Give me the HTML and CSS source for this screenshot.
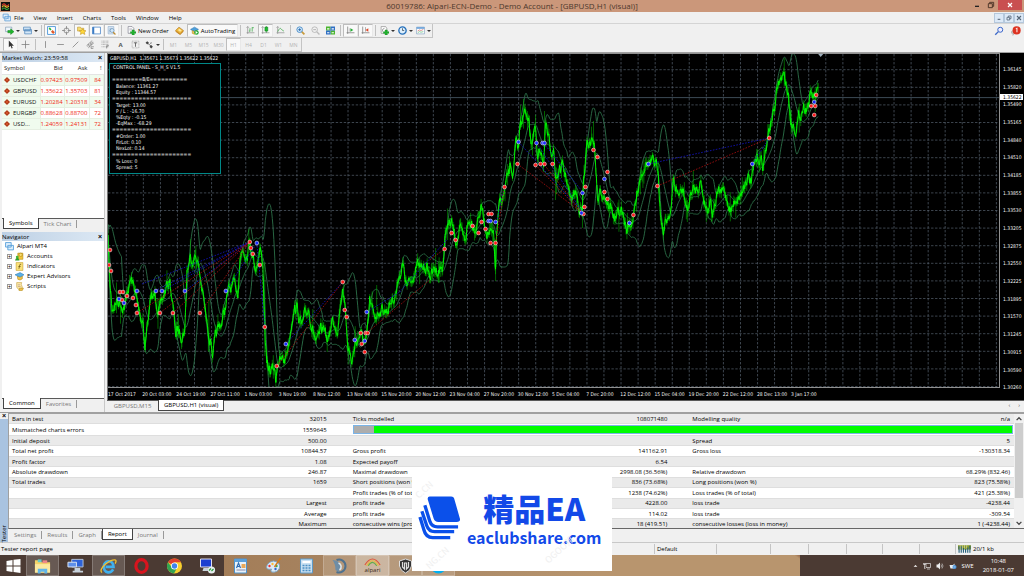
FILE: index.html
```html
<!DOCTYPE html>
<html lang="en">
<head>
<meta charset="utf-8">
<title>60019786: Alpari-ECN-Demo - Demo Account</title>
<link rel="stylesheet" href="styles.css">
</head>
<body>
<header class="titlebar">
  <svg class="logo" viewBox="0 0 16 16"><path fill="#111" d="M0 0h16v16H0z"/><path d="M2 6q3-5 6-1t6-1" stroke="#d8372a" stroke-width="2" fill="none"/><path d="M2 9q3-4 6-1t6-1" stroke="#e8c030" stroke-width="2" fill="none"/><path d="M2 13q3-4 6-1t6-1" stroke="#3ba33b" stroke-width="2" fill="none"/></svg>
  <h1 class="title">60019786: Alpari-ECN-Demo - Demo Account - [GBPUSD,H1 (visual)]</h1>
  <div class="winbtns">
    <button class="winbtn" aria-label="Minimize"><svg viewBox="0 0 12 12"><path d="M3 8h6" stroke="#222" stroke-width="2"/></svg></button>
    <button class="winbtn" aria-label="Restore"><svg viewBox="0 0 12 12"><path d="M2 4h6v6H2zM4 4V2h6v6H8" fill="none" stroke="#4a3326" stroke-width="1.4"/></svg></button>
    <button class="winbtn close" aria-label="Close"><svg viewBox="0 0 12 12"><path d="M3 3l6 6M9 3l-6 6" stroke="#fff" stroke-width="1.8"/></svg></button>
  </div>
</header>
<nav class="menubar">
  <svg class="menulogo" viewBox="0 0 16 16"><path d="M2 2h9v7H2zM5 6h10v8H5z" fill="#e8f3fc" stroke="#5b9bd5" stroke-width="1.4"/><path d="M7 12l2-3 2 2 2-3" fill="none" stroke="#5b9bd5"/></svg>
  <button>File</button><button>View</button><button>Insert</button><button>Charts</button><button>Tools</button><button>Window</button><button>Help</button>
  <div class="mdibtns">
    <button aria-label="Minimize chart"><svg viewBox="0 0 12 12"><path d="M4 8h4" stroke="#567" stroke-width="1.6"/></svg></button>
    <button aria-label="Restore chart"><svg viewBox="0 0 12 12"><path d="M3 5h4v4H3zM5 5V3h4v4H7" fill="none" stroke="#567" stroke-width="1.2"/></svg></button>
    <button aria-label="Close chart"><svg viewBox="0 0 12 12"><path d="M3 3l6 6M9 3l-6 6" stroke="#567" stroke-width="1.6"/></svg></button>
  </div>
</nav>
<div class="toolrow">
  <div class="tools">
    <button class="tool drop" aria-label="New chart"><svg viewBox="0 0 16 16"><path d="M1 2h11v8H1z" fill="#eef5fb" stroke="#6d8ba8"/><path d="M5 8h5V5l6 5-6 5v-3H5z" fill="#1db42a" stroke="#0d7a18" stroke-width=".8"/></svg></button>
    <button class="tool drop" aria-label="Profiles"><svg viewBox="0 0 16 16"><path d="M1 2h12v6H1zM3 6h12v8H3z" fill="#d6e8f8" stroke="#4f86bb" stroke-width="1.3"/><path d="M3 9h12" stroke="#4f86bb"/></svg></button>
    <i class="sep"></i>
    <button class="tool on" aria-label="Market Watch"><svg viewBox="0 0 16 16"><path d="M1 1h14v14H1z" fill="#fff" stroke="#4a94d8" stroke-width="1.6"/><path d="M3 5l2-3 3 4-2 2z" fill="#26b43a"/><path d="M7 10l3-3 4 4-3 3z" fill="#e05a2a"/></svg></button>
    <button class="tool" aria-label="Data Window"><svg viewBox="0 0 16 16"><circle cx="8" cy="8" r="4.5" fill="none" stroke="#777" stroke-width="1.3"/><path d="M8 0v6M8 10v6M0 8h6M10 8h6" stroke="#777" stroke-width="1.2"/></svg></button>
    <button class="tool on" aria-label="Navigator"><svg viewBox="0 0 16 16"><path d="M1 2h5l1 2h5v5H1z" fill="#f5dd72" stroke="#bd9120"/><path d="M10 5l2 3 4 .5-3 2.500 1 4-4-2-4 2 1-4-3-2.500 4-.5z" fill="#ffd83a" stroke="#bd8a10" stroke-width=".9"/></svg></button>
    <button class="tool on" aria-label="Terminal"><svg viewBox="0 0 16 16"><path d="M1 2h14v12H1z" fill="#fff" stroke="#3c7cc4" stroke-width="1.3"/><path d="M1 2h3v12H1z" fill="#3c7cc4"/></svg></button>
    <button class="tool on" aria-label="Strategy Tester"><svg viewBox="0 0 16 16"><path d="M2 1h10v13H2z" fill="#e6f0fa" stroke="#7da0c4"/><path d="M4 4h6M4 6v6M6 5v6" stroke="#7da0c4"/><circle cx="9" cy="8" r="3.500" fill="#d2e8fa" stroke="#5580a8"/><path d="M11 11l4 4" stroke="#c08c30" stroke-width="2.200"/></svg></button>
    <i class="sep"></i>
    <button class="tool wide"><svg viewBox="0 0 16 16"><path d="M2 1h7l3 3v9H2z" fill="#fff" stroke="#667"/><path d="M4 5h5M4 7h6" stroke="#99a"/><path d="M9 7h4v3h3v3h-3v3H9v-3H6v-3h3z" fill="#20b32d" stroke="#0d7a18" stroke-width=".6"/></svg>New Order</button>
    <button class="tool" aria-label="MetaEditor"><svg viewBox="0 0 16 16"><path d="M1 8l6-6 8 6-6 6z" fill="#f0b93a" stroke="#a56d12"/><path d="M1 8l8 6v2L1 10zM9 14l6-6v2l-6 6z" fill="#c98418"/><path d="M5 7l3-2 4 3-3 2z" fill="#fce9a5"/></svg></button>
    <button class="tool wide on"><svg viewBox="0 0 16 16"><path d="M1 6l7-4 7 4-7 4z" fill="#4ba0dd" stroke="#2b6fa8"/><path d="M4 8v5q4 3 7 0V8l-3 2z" fill="#f0c85a" stroke="#b88a20"/><circle cx="11.500" cy="11.500" r="4" fill="#22aa33"/><path d="M10 9l4 2.500-4 2.500z" fill="#fff"/></svg>AutoTrading</button>
    <i class="sep"></i>
    <button class="tool" aria-label="Bar chart"><svg viewBox="0 0 16 16"><path d="M3 1v13M1 12h14M1 3l2-2 2 2" fill="none" stroke="#888" stroke-width="1.200"/><path d="M7 4v6M5 9h2M11 2v8M11 3h3" stroke="#3aa846" stroke-width="1.300"/></svg></button>
    <button class="tool on" aria-label="Candlesticks"><svg viewBox="0 0 16 16"><path d="M3 1v13M1 12h14M1 3l2-2 2 2" fill="none" stroke="#888" stroke-width="1.200"/><path d="M9.500 0v12" stroke="#0c7a1b"/><path d="M7 2h5v7H7z" fill="#1fc02f" stroke="#0c7a1b"/></svg></button>
    <button class="tool" aria-label="Line chart"><svg viewBox="0 0 16 16"><path d="M3 1v13M1 12h14M1 3l2-2 2 2" fill="none" stroke="#888" stroke-width="1.200"/><path d="M3 10q4-8 6-5t5 4" fill="none" stroke="#3aa846" stroke-width="1.300"/></svg></button>
    <i class="sep"></i>
    <button class="tool" aria-label="Zoom in"><svg viewBox="0 0 16 16"><path d="M10 10l5 5" stroke="#c99a3a" stroke-width="3"/><circle cx="6.500" cy="6.500" r="5" fill="#d8ecfb" stroke="#3d84c4" stroke-width="1.500"/><path d="M4 6.500h5M6.500 4v5" stroke="#1f62a8" stroke-width="1.500"/></svg></button>
    <button class="tool" aria-label="Zoom out"><svg viewBox="0 0 16 16"><path d="M10 10l5 5" stroke="#bbb" stroke-width="2.500"/><circle cx="6.500" cy="6.500" r="5" fill="#f2f2f2" stroke="#aaa" stroke-width="1.300"/><path d="M4 6.500h5" stroke="#999" stroke-width="1.300"/></svg></button>
    <button class="tool" aria-label="Tile windows"><svg viewBox="0 0 16 16"><path d="M0 1h8v7H0zM8 8h8v7H8z" fill="#4bb52f"/><path d="M8 1h8v7H8zM0 8h8v7H0z" fill="#2f6fc4"/><path d="M2 4h4v2H2zM10 4h4v2h-4zM2 11h4v2H2zM10 11h4v2h-4z" fill="#fff"/></svg></button>
    <i class="sep"></i>
    <button class="tool on" aria-label="Auto scroll"><svg viewBox="0 0 16 16"><path d="M3 1v13M1 12h14" stroke="#777" stroke-width="1.300"/><path d="M7 4v6" stroke="#777"/><path d="M8 4l5 3-5 3z" fill="#1fae2f"/></svg></button>
    <button class="tool on" aria-label="Chart shift"><svg viewBox="0 0 16 16"><path d="M3 1v13M1 12h14" stroke="#777" stroke-width="1.300"/><path d="M8 2v8" stroke="#777"/><path d="M13 4L8 7l5 3z" fill="#e0482a"/></svg></button>
    <i class="sep"></i>
    <button class="tool drop" aria-label="Indicators"><svg viewBox="0 0 16 16"><path d="M2 1h8l2 3v9H2z" fill="#fff" stroke="#777"/><path d="M4 10q0-6 4-6" fill="none" stroke="#555"/><path d="M9 7h4v3h3v3h-3v3H9v-3H6v-3h3z" fill="#20b32d" stroke="#0d7a18" stroke-width=".6"/></svg></button>
    <button class="tool drop" aria-label="Periods"><svg viewBox="0 0 16 16"><circle cx="8" cy="8" r="6.500" fill="#dceefb" stroke="#2570ba" stroke-width="2.400"/><path d="M8 4v4h3" fill="none" stroke="#234" stroke-width="1.200"/></svg></button>
    <button class="tool drop" aria-label="Templates"><svg viewBox="0 0 16 16"><path d="M1 2h14v12H1z" fill="#fff" stroke="#6f93b8"/><path d="M1 2h14v3H1z" fill="#6ba3da"/><path d="M3 9l3-2 3 1 4-2" stroke="#c44" fill="none"/><path d="M3 12l3-2 3 1 4-1" stroke="#3a5" fill="none"/></svg></button>
  </div>
  <div class="toolside">
    <button class="tool" aria-label="Search"><svg viewBox="0 0 16 16"><path d="M7 9l-5 5" stroke="#3a67c8" stroke-width="2.200"/><circle cx="10" cy="6" r="4" fill="#eef" stroke="#3a67c8" stroke-width="1.600"/></svg></button>
    <button class="tool" aria-label="Notifications"><svg viewBox="0 0 16 16"><path d="M0 11q0-4 5-4h4v5H5l-2 3v-3z" fill="#ccc" stroke="#999" stroke-width=".7"/><circle cx="9" cy="7" r="6.500" fill="#dd3322"/><path d="M8 4.500L9.500 3v7" fill="none" stroke="#fff" stroke-width="1.600"/></svg></button>
  </div>
</div>
<div class="toolrow second">
  <div class="tools">
    <button class="tool on" aria-label="Cursor"><svg viewBox="0 0 16 16"><path d="M5 1v12l3-3 2 5 2-1-2-4h4z" fill="#333"/></svg></button>
    <button class="tool" aria-label="Crosshair"><svg viewBox="0 0 16 16"><path d="M8 1v14M1 8h14" stroke="#777" stroke-width="1.300"/></svg></button>
    <i class="sep"></i>
    <button class="tool" aria-label="Vertical line"><svg viewBox="0 0 16 16"><path d="M8 2v12" stroke="#777" stroke-width="1.300"/></svg></button>
    <button class="tool" aria-label="Horizontal line"><svg viewBox="0 0 16 16"><path d="M2 8h12" stroke="#777" stroke-width="1.300"/></svg></button>
    <button class="tool" aria-label="Trendline"><svg viewBox="0 0 16 16"><path d="M3 13L13 3" stroke="#777" stroke-width="1.300"/></svg></button>
    <button class="tool" aria-label="Channel"><svg viewBox="0 0 16 16"><path d="M1 10L11 1M4 14l10-9M3 12l2-5M6 12l3-8M9 9l3-6M9 12h5M9 15h4M9 12v3" stroke="#666" fill="none"/></svg></button>
    <button class="tool" aria-label="Fibonacci"><svg viewBox="0 0 16 16"><path d="M1 2h13M1 5h13M1 8h13M1 12h8" stroke="#777" stroke-dasharray="1.500 1"/><path d="M10 15v-5h4M10 12h3" fill="none" stroke="#555"/></svg></button>
    <button class="tool glyph">A</button>
    <button class="tool" aria-label="Text label"><svg viewBox="0 0 16 16"><path d="M2 2h12v12H2z" fill="none" stroke="#888" stroke-dasharray="1.500 1"/><path d="M5 5h6M8 5v7" stroke="#555" stroke-width="1.500"/></svg></button>
    <button class="tool drop" aria-label="Arrows"><svg viewBox="0 0 16 16"><path d="M1 5l3-3 3 3-3 3zM8 12l3-3 3 3-3 3z" fill="#444"/><path d="M5 6l6 5M9 6l3-1" stroke="#444" stroke-width="1.300"/></svg></button>
    <i class="sep"></i>
    <button class="tool tf">M1</button><button class="tool tf">M5</button><button class="tool tf">M15</button><button class="tool tf">M30</button><button class="tool tf on">H1</button><button class="tool tf">H4</button><button class="tool tf">D1</button><button class="tool tf">W1</button><button class="tool tf">MN</button>
  </div>
</div>
<main class="work">
  <aside class="side">
    <section class="panel watch">
      <div class="panelhead"><h2>Market Watch: 23:59:58</h2><button aria-label="Close Market Watch">×</button></div>
      <table class="quotes">
        <thead><tr><th>Symbol</th><th>Bid</th><th>Ask</th><th>!</th></tr></thead>
        <tbody>
          <tr><td><i class="diamond"></i>USDCHF</td><td>0.97425</td><td>0.97509</td><td>84</td></tr>
          <tr><td><i class="diamond"></i>GBPUSD</td><td>1.35622</td><td>1.35703</td><td>81</td></tr>
          <tr><td><i class="diamond"></i>EURUSD</td><td>1.20284</td><td>1.20318</td><td>34</td></tr>
          <tr><td><i class="diamond"></i>EURGBP</td><td>0.88628</td><td>0.88700</td><td>72</td></tr>
          <tr><td><i class="diamond"></i>USD...</td><td>1.24059</td><td>1.24131</td><td>72</td></tr>
        </tbody>
      </table>
      <div class="tabs"><button class="tab active">Symbols</button><button class="tab">Tick Chart</button></div>
    </section>
    <section class="panel nav">
      <div class="panelhead"><h2>Navigator</h2><button aria-label="Close Navigator">×</button></div>
      <ul class="tree">
        <li><svg viewBox="0 0 16 16"><path d="M1 1h10v8H1zM5 6h10v8H5z" fill="#dff0fc" stroke="#4f9ad8" stroke-width="1.500"/></svg>Alpari MT4
          <ul>
            <li><i class="plus">+</i><svg viewBox="0 0 16 16"><path d="M5 2h9v11H5z" fill="#f3c63a" stroke="#b18712"/><circle cx="10" cy="5" r="3" fill="#f7dc70" stroke="#a87e10"/><circle cx="4" cy="9" r="2.500" fill="#46b535"/><path d="M0 15q1-5 4-5t4 5z" fill="#2f9e2c"/></svg>Accounts</li>
            <li><i class="plus">+</i><svg viewBox="0 0 16 16"><path d="M2 1h12v14H2z" fill="#fae27a" stroke="#c29a22"/><path d="M11 4q-3-1-3 3l-1 5M6 8h4" fill="none" stroke="#6a5210" stroke-width="1.300"/></svg>Indicators</li>
            <li><i class="plus">+</i><svg viewBox="0 0 16 16"><path d="M4 7h9v5q-4 4-8 1z" fill="#f3c24a" stroke="#b18712"/><path d="M0 5l9-4 7 4-7 4z" fill="#5bb1e6" stroke="#2f7db8"/></svg>Expert Advisors</li>
            <li><i class="plus">+</i><svg viewBox="0 0 16 16"><path d="M3 1h9l-1 3 2 5-1 4H6L3 9z" fill="#fae9a5" stroke="#c29a3a"/><path d="M5 5h4M5 8h5" stroke="#a88"/><path d="M8 11h7l-2 4H7z" fill="#f3c24a" stroke="#b18712"/></svg>Scripts</li>
          </ul>
        </li>
      </ul>
      <div class="tabs"><button class="tab active">Common</button><button class="tab">Favorites</button></div>
    </section>
  </aside>
  <section class="charts">
    <div class="chart">
      <div class="plot">
        <svg id="plot" viewBox="108 54 892 333" preserveAspectRatio="none" role="img" aria-label="GBPUSD H1 price chart"></svg>
        <div class="symbol">GBPUSD,H1&nbsp; 1.35671 1.35673 1.35622 1.35622</div>
        <div class="control">
          <p class="heading">CONTROL PANEL - S_H_S V1.5</p>
          <p class="rule first">========B/E==========</p>
          <p>Balance: 11361.27</p><p>Equity : 11344.57</p>
          <p class="rule">=====================</p>
          <p>Target: 13.00</p><p>P / L : -16.70</p><p>%Eqty : -0.15</p><p>-EqMax : -68.29</p>
          <p class="rule">=====================</p>
          <p>#Order: 1.00</p><p>FirLot: 0.10</p><p>NexLot: 0.14</p>
          <p class="rule">=====================</p>
          <p>% Loss: 0</p><p>Spread: 5</p>
        </div>
      </div>
      <div class="prices">
        <span>1.36145</span><span>1.35820</span><span>1.35490</span><span>1.35165</span><span>1.34840</span><span>1.34510</span><span>1.34185</span><span>1.33855</span><span>1.33530</span><span>1.33205</span><span>1.32875</span><span>1.32550</span><span>1.32225</span><span>1.31895</span><span>1.31570</span><span>1.31245</span><span>1.30915</span><span>1.30590</span><span>1.30260</span>
        <b class="current">1.35622</b>
      </div>
      <div class="times">
        <span>17 Oct 2017</span><span>20 Oct 03:00</span><span>24 Oct 19:00</span><span>27 Oct 11:00</span><span>1 Nov 03:00</span><span>3 Nov 19:00</span><span>8 Nov 12:00</span><span>13 Nov 04:00</span><span>15 Nov 20:00</span><span>20 Nov 12:00</span><span>23 Nov 04:00</span><span>27 Nov 20:00</span><span>30 Nov 12:00</span><span>5 Dec 04:00</span><span>7 Dec 20:00</span><span>12 Dec 12:00</span><span>15 Dec 04:00</span><span>19 Dec 20:00</span><span>22 Dec 12:00</span><span>28 Dec 13:00</span><span>3 Jan 17:00</span>
      </div>
    </div>
    <div class="tabs charttabs"><button class="tab">GBPUSD,M15</button><button class="tab active">GBPUSD,H1 (visual)</button><span class="pager">‹&nbsp;&nbsp;&nbsp;&nbsp;&nbsp;›</span></div>
  </section>
</main>
<section class="tester">
  <div class="testerside"><button aria-label="Close Tester">×</button><h2>Tester</h2></div>
  <div class="testermain">
    <div class="reportwrap">
      <div class="reportclip">
      <table class="report">
        <tbody>
          <tr><td>Bars in test</td><td>32015</td><td>Ticks modelled</td><td>108071480</td><td>Modelling quality</td><td>n/a</td></tr>
          <tr><td>Mismatched charts errors</td><td>1559645</td><td colspan="4" class="barcell"><div class="bar"><i></i></div></td></tr>
          <tr><td>Initial deposit</td><td>500.00</td><td></td><td></td><td>Spread</td><td>5</td></tr>
          <tr><td>Total net profit</td><td>10844.57</td><td>Gross profit</td><td>141162.91</td><td>Gross loss</td><td>-130318.34</td></tr>
          <tr><td>Profit factor</td><td>1.08</td><td>Expected payoff</td><td>6.54</td><td></td><td></td></tr>
          <tr><td>Absolute drawdown</td><td>246.87</td><td>Maximal drawdown</td><td>2998.08 (36.56%)</td><td>Relative drawdown</td><td>68.29% (832.46)</td></tr>
          <tr><td>Total trades</td><td>1659</td><td>Short positions (won %)</td><td>836 (73.68%)</td><td>Long positions (won %)</td><td>823 (75.58%)</td></tr>
          <tr><td></td><td></td><td>Profit trades (% of total)</td><td>1238 (74.62%)</td><td>Loss trades (% of total)</td><td>421 (25.38%)</td></tr>
          <tr><td></td><td>Largest</td><td>profit trade</td><td>4228.00</td><td>loss trade</td><td>-4238.44</td></tr>
          <tr><td></td><td>Average</td><td>profit trade</td><td>114.02</td><td>loss trade</td><td>-309.54</td></tr>
          <tr><td></td><td>Maximum</td><td>consecutive wins (profit in money)</td><td>18 (419.51)</td><td>consecutive losses (loss in money)</td><td>1 (-4238.44)</td></tr>
        </tbody>
      </table>
      </div>
      <div class="scroll"><svg viewBox="0 0 10 10"><path d="M2 7l3-3 3 3" fill="none" stroke="#444" stroke-width="1.600"/></svg><i></i><svg viewBox="0 0 10 10"><path d="M2 3l3 3 3-3" fill="none" stroke="#444" stroke-width="1.600"/></svg></div>
    </div>
    <div class="tabs testertabs"><button class="tab">Settings</button><button class="tab">Results</button><button class="tab">Graph</button><button class="tab active">Report</button><button class="tab">Journal</button></div>
  </div>
</section>
<footer class="status">
  <span class="msg">Tester report page</span>
  <div class="cells"><span>Default</span><span></span><span></span><span></span><span></span><span></span><span></span><span class="net"><svg viewBox="0 0 24 14"><path d="M0 0h24v8H0z" fill="#8a9a2a"/><path d="M2 2v12M6 2v12M10 5v9M14 7v7M18 4v10M22 1v13" stroke="#1f5d7a" stroke-width="2"/><path d="M4 0v8M8 0v8M12 0v6M16 0v6" stroke="#eef0d0"/></svg>20/1 kb</span></div>
</footer>
<footer class="taskbar">
  <div class="apps">
    <button aria-label="Start"><svg viewBox="0 0 16 16"><path d="M1 3l6-1v5.500H1zM8 1.800L15 1v6.500H8zM1 8.500h6V14l-6-1zM8 8.500h7V15l-7-1z" fill="#fff"/></svg></button>
    <button class="open" aria-label="File Explorer"><svg viewBox="0 0 18 16"><path d="M1 2h6l1 2h9v11H1z" fill="#f4d468"/><path d="M4 1h4v3H4z" fill="#6cc"/><path d="M9 2h5v3H9z" fill="#e88"/><path d="M1 6h16v9H1z" fill="#fbe9a0"/><path d="M4 16v-5h10v5h-3v-2H7v2z" fill="#62b5e8"/></svg></button>
    <button aria-label="Remote Desktop"><svg viewBox="0 0 18 16"><path d="M5 1h12v8H5z" fill="#2e62d8" stroke="#b8c6d8"/><path d="M1 4h9v5H1z" fill="#5e8fe8" stroke="#dde6f2"/><path d="M8 10h6v3H8zM6 13h11v2H6z" fill="#c8d2dc"/></svg></button>
    <button class="open" aria-label="Internet Explorer"><svg viewBox="0 0 18 16"><path d="M14 11.500q-2 3.500-5.500 3.200Q4 14 4 8.500 4.500 3.500 9 3q5 0 5.300 6H6" fill="none" stroke="#3fb0ee" stroke-width="2.800"/><path d="M2 15Q-1 12 6 6q6-5 10-4.500 2 .5 0 4" fill="none" stroke="#f2c02c" stroke-width="1.400"/></svg></button>
    <button aria-label="Opera"><svg viewBox="0 0 16 16"><ellipse cx="8" cy="8" rx="5.600" ry="6.400" fill="none" stroke="#d8141e" stroke-width="3.200"/></svg></button>
    <button aria-label="Chrome"><svg viewBox="0 0 16 16"><circle cx="8" cy="8" r="7.500" fill="#f7cf2e"/><path d="M8 8L1.500 4.200A7.500 7.500 0 0 1 14.500 4.200H8z" fill="#e0412f"/><path d="M1.500 4.200A7.500 7.500 0 0 0 7.500 15.500L10.500 10 8 8 5 9z" fill="#33a352"/><circle cx="8" cy="8" r="3.500" fill="#fff"/><circle cx="8" cy="8" r="2.700" fill="#3f83ee"/></svg></button>
    <button aria-label="Terminal server"><svg viewBox="0 0 16 16"><path d="M1 1h11v8H1z" fill="#1d3fd0" stroke="#dde"/><path d="M4 10h6v3H3z" fill="#ccd4dc"/><circle cx="12" cy="12" r="3.600" fill="#e8eef0"/><path d="M9.500 12.500l2-2M12 13l2-2" stroke="#2a9a3a" stroke-width="1.200"/></svg></button>
    <button aria-label="WordPad"><svg viewBox="0 0 16 16"><path d="M2 1h12v14H2z" fill="#e9f3fb" stroke="#4f93cc"/><path d="M2 1h12v3H2z" fill="#5aa0dc"/><path d="M4 10l2-5 2 5M5 8.500h2" fill="none" stroke="#2d6cb4" stroke-width="1.200"/><path d="M9 6h4v4H9z" fill="#e9a95a"/><path d="M4 12h9" stroke="#88a"/></svg></button>
    <button aria-label="Paint"><svg viewBox="0 0 16 16"><path d="M8 3q7 1 6 7-2 5-8 4-1-1 0-3-5 1-5-2 1-5 7-6z" fill="#dcebf6" stroke="#7fa6c4"/><circle cx="4" cy="8" r="1.200" fill="#e33"/><circle cx="7" cy="6" r="1.200" fill="#fb3"/><circle cx="11" cy="8" r="1.200" fill="#3a5"/><circle cx="10" cy="11" r="1.200" fill="#36c"/><path d="M15 0L9 9" stroke="#d07a20" stroke-width="1.500"/></svg></button>
    <button aria-label="Calculator"><svg viewBox="0 0 16 16"><path d="M2 1h12v14H2z" fill="#c9e0f2" stroke="#5f9bc8"/><path d="M4 3h8v2H4z" fill="#fff"/><path d="M4 7.500h8M4 10h8M4 12.500h8" stroke="#4c8fc4" stroke-width="1.600" stroke-dasharray="2 1"/></svg></button>
    <button class="open" aria-label="TeamSpeak"><svg viewBox="0 0 16 16"><path d="M5 2a6.500 6.500 0 1 1 0 12" fill="none" stroke="#4f718e" stroke-width="2"/><path d="M1 2q7 0 9 7l-3 5-3-2q0-6-3-10z" fill="#6d8da6"/><path d="M7 5a4 4 0 0 1 1 7" fill="none" stroke="#dfe8ee" stroke-width="1.600"/></svg></button>
    <button class="open lit"><svg class="rainbow" viewBox="0 0 20 9"><path d="M1 8Q10-6 19 8" fill="none" stroke="#e0563a" stroke-width="1.300"/><path d="M3 9Q10-3 17 9" fill="none" stroke="#efb63c" stroke-width="1.300"/><path d="M5 9q5-8 10 0" fill="none" stroke="#64ac4a" stroke-width="1.300"/></svg>alpari</button>
    <button class="open" aria-label="World of Tanks"><svg viewBox="0 0 16 16"><path d="M8 1l6 2v5q-1 5-6 7-5-2-6-7V3z" fill="#333" stroke="#ddd"/><path d="M5 4v5l2 2V5h2v6l2-2V4" fill="none" stroke="#ddd" stroke-width="1.200"/></svg></button>
    <button class="open" aria-label="Skype"><svg viewBox="0 0 16 16"><circle cx="8" cy="8" r="7.500" fill="#00aff0"/></svg></button>
  </div>
  <div class="tray">
    <svg class="up" viewBox="0 0 8 8"><path d="M1 6l3-3 3 3z" fill="#fff"/></svg>
    <svg viewBox="0 0 16 16"><path d="M6 3h9v8H6zM8 14h6M3 2v5M1 2v3h4V2M3 7v6h2" fill="none" stroke="#eee" stroke-width="1.300"/></svg>
    <svg viewBox="0 0 16 16"><path d="M1 5h3l4-4v14l-4-4H1z" fill="#eee"/><path d="M10 5q2 3 0 6M12 3q4 5 0 10" fill="none" stroke="#ddd" stroke-width="1.200"/></svg>
    <svg viewBox="0 0 16 16"><path d="M1 6h7l3-3v10H3z" fill="#e8eef2"/><circle cx="11" cy="10" r="4" fill="#4b94dc"/><path d="M9 10h4" stroke="#fff"/></svg>
    <span>SWE</span>
    <time>10:48<br>2018-01-07</time>
  </div>
</footer>
<div class="stamp">
  <svg viewBox="0 0 44 44"><path fill="#0b50ea" d="M12 0h22q2.500 0 3 2l6 21q.5 3-3.500 3H21q-4 0-5-3.500L10 3q-.5-3 2-3z"/><path d="M7 9l5 16q2 6 8 6h21M4 15l5 15q2 6 8 6h20M2 21l4 13q2 8 9 8h18" fill="none" stroke="#0b50ea" stroke-width="3.400"/></svg>
  <div class="stamptext"><strong>精品EA</strong><span>eaclubshare.com</span></div>
  <i class="faint a">C.CN</i><i class="faint b">NG.CN</i><i class="faint c">OGOO邦</i>
</div>
<script src="chart.js"></script>
</body>
</html>
```
FILE: styles.css
```css
* { box-sizing: border-box; }
body { margin: 0; height: 100vh; display: flex; flex-direction: column; overflow: hidden; background: #f0f0f0; color: #000; font: 6px/8px "Open Sans", "Noto Sans", sans-serif; }
button { font: inherit; color: inherit; background: none; border: 0; padding: 0; margin: 0; white-space: nowrap; }
h1, h2, p { margin: 0; font: inherit; }
svg { display: block; flex: none; }
ul { list-style: none; margin: 0; padding: 0; }

.titlebar { flex: none; height: 12px; display: flex; align-items: center; background: #cb977a; }
.logo { width: 9px; height: 9px; margin-left: 1px; }
.title { flex: 1; text-align: center; font-size: 8px; line-height: 12px; color: #4b382d; padding-left: 44px; }
.winbtns { display: flex; align-self: stretch; margin-right: 2px; }
.winbtn { width: 14px; height: 10px; display: flex; align-items: center; justify-content: center; }
.winbtn svg { width: 8px; height: 8px; }
.close { width: 24px; background: #c94f50; }

.menubar { flex: none; height: 12px; display: flex; align-items: center; gap: 10px; border-bottom: 1px solid #d4d4d4; padding-left: 2px; }
.menulogo { width: 9px; height: 9px; margin-right: -7px; }
.mdibtns { margin-left: auto; display: flex; }
.mdibtns button { width: 10px; height: 10px; display: flex; align-items: center; justify-content: center; background: #dce9f7; border: 1px solid #b5c8dc; }
.mdibtns svg { width: 8px; height: 8px; }

.toolrow { flex: none; height: 14px; display: flex; justify-content: space-between; }
.tools { display: flex; align-items: center; padding-left: 3px; border: solid #c4c4c4; border-width: 0 1px 1px 0; }
.tool { width: 15px; height: 13px; display: flex; align-items: center; justify-content: center; gap: 2px; border: 1px solid transparent; }
.tool svg { width: 9px; height: 9px; }
.tool.on { background: #f9f9f9; border-color: #bdbdbd #e8e8e8 #e8e8e8 #bdbdbd; }
.tool.wide { width: auto; padding: 0 2px; }
.tool.drop { width: 18px; }
.tool.drop::after { content: ""; border: 2px solid transparent; border-top-color: #333; border-bottom-width: 0; }
.sep { width: 1px; height: 11px; margin: 0 2px; background: #c0c0c0; }
.toolside { display: flex; gap: 2px; padding-right: 1px; align-items: center; }
.toolside .tool svg { width: 10px; height: 10px; }
.glyph { font-weight: bold; color: #555; }
.tf { color: #b4b4b4; font-size: 5px; }

.work { flex: 1; min-height: 0; display: flex; gap: 2px; border-top: 1px solid #a0a0a0; }
.side { flex: none; width: 105px; display: flex; flex-direction: column; gap: 2px; padding: 0 0 2px 2px; border-right: 1px solid #c8c8c8; }
.panel { display: flex; flex-direction: column; background: #fff; min-height: 0; }
.watch { flex: 176 0 0; }
.nav { flex: 177 0 0; }
.panelhead { flex: none; height: 9px; display: flex; justify-content: space-between; align-items: center; background: linear-gradient(90deg, #bdd0e4, #dce8f4); padding-right: 2px; }
.panelhead button { font: bold 7px/8px "Liberation Sans", sans-serif; }
.quotes { border-collapse: collapse; width: 100%; table-layout: fixed; }
.quotes th { height: 12px; font-weight: normal; text-align: right; padding: 0 2px; border-bottom: 1px solid #e4e4e4; color: #222; }
.quotes th:first-child, .quotes td:first-child { text-align: left; width: 38px; padding-left: 2px; }
.quotes th:last-child, .quotes td:last-child { width: 14px; }
.quotes td { height: 11px; padding: 0 2px 0 0; text-align: right; color: #f01f14; background: #fff; border: 1px solid #e6efe2; border-width: 0 1px 1px 0; white-space: nowrap; }
.quotes td:first-child { color: #111; background: #effaec; }
.quotes tr:nth-child(odd) td { background: #f0fbee; }
.diamond { display: inline-block; width: 4px; height: 4px; margin: 0 4px 0 1px; background: #d8542a; border: 1px solid #a8381a; transform: rotate(45deg); vertical-align: middle; }
.tabs { flex: none; display: flex; height: 12px; background: #f0f0f0; border-top: 1px solid #5a5a5a; padding-left: 1px; align-items: flex-start; }
.side .tabs { margin-top: auto; }
.tab { height: 8px; padding: 0 5px; border-right: 1px solid #999; color: #777; margin-top: 1px; line-height: 8px; }
.tab.active { height: 11px; margin-top: -1px; background: #fff; border: solid #444; border-width: 0 1px 1px; color: #000; line-height: 10px; }
.tree { padding: 0 3px; }
.tree li { line-height: 10px; }
.tree svg { display: inline-block; width: 9px; height: 9px; margin-right: 3px; vertical-align: middle; }
.tree ul { padding-left: 2px; }
.plus { display: inline-block; width: 5px; height: 5px; margin-right: 3px; border: 1px solid #999; font: 5px/3px "Liberation Sans", sans-serif; text-align: center; vertical-align: middle; }

.charts { flex: 1; min-width: 0; display: flex; flex-direction: column; }
.chart { flex: 1; min-height: 0; display: grid; grid-template-columns: 1fr 24px; grid-template-rows: 1fr 12px; background: #000; color: #f4f4f4; border-left: 1px solid #777; font: 5px/6px "DejaVu Sans Condensed", "DejaVu Sans", sans-serif; }
.plot { position: relative; min-height: 0; min-width: 0; border: solid #909090; border-width: 1px 1px 1px 0; }
.plot > svg { position: absolute; inset: 0; width: 100%; height: 100%; }
.symbol { position: absolute; left: 2px; top: 1px; }
.control { position: absolute; left: 1px; top: 9px; width: 112px; padding-bottom: 3px; background: #000; border: 1px solid #008888; }
.control p { padding-left: 6px; line-height: 6px; }
.control .heading { padding-left: 3px; }
.control .rule { padding-left: 2px; line-height: 7px; }
.control .first { margin-top: 6px; }
.prices { position: relative; display: flex; flex-direction: column; margin: 7px 0 -8px; padding-left: 3px; }
.prices span { flex: 1; display: flex; align-items: center; }
.current { position: absolute; left: 0; right: 1px; top: 34px; padding-left: 3px; background: #fff; color: #000; font-weight: normal; }
.times { display: grid; grid-template-columns: repeat(26, 1fr); padding-right: 4px; white-space: nowrap; align-items: center; }
.charttabs { height: 12px; padding-left: 0; }
.charttabs .tab:first-child { border: 0; width: 51px; }
.pager { margin-left: auto; padding-right: 4px; color: #555; }

.tester { flex: none; height: 130px; display: flex; border-top: 1px solid #a0a0a0; }
.testerside { width: 8px; display: flex; flex-direction: column; justify-content: space-between; align-items: center; background: #a9c3e0; }
.testerside button { width: 100%; background: #f0f0f0; font: bold 7px/6px "Liberation Sans", sans-serif; }
.testerside h2 { writing-mode: vertical-rl; transform: rotate(180deg); }
.testermain { flex: 1; min-width: 0; display: flex; flex-direction: column; }
.reportwrap { flex: none; height: 116px; display: flex; overflow: hidden; border-top: 1px solid #a0a0a0; border-left: 1px solid #a0a0a0; border-bottom: 1px solid #666; background: #fff; }
.reportclip { flex: 1; overflow: hidden; }
.report { width: 100%; height: 116px; border-collapse: collapse; table-layout: fixed; }
.report td { padding: 0 4px 0 3px; white-space: nowrap; border-bottom: 1px solid #dedede; line-height: 8px; }
.report tr:nth-child(odd) { background: #eaeaea; }
.report td:nth-child(even) { text-align: right; }
.report td:nth-child(1), .report td:nth-child(2) { width: 17%; }
.report td:nth-child(3) { padding-left: 2px; }
.report td:nth-child(5) { padding-left: 10px; }
.report td:nth-child(2) { padding-right: 24px; }
.report td:nth-child(4) { padding-right: 15px; }
.report .barcell { padding: 0 1px 0 0; }
.bar { height: 9px; background: #00fc00; border: 1px solid #7ab4e8; }
.bar i { display: block; width: 20px; height: 7px; background: #adadad; }
.scroll { width: 10px; display: flex; flex-direction: column; align-items: center; background: #f0f0f0; }
.scroll svg { width: 8px; height: 9px; }
.scroll i { width: 8px; height: 75px; background: #cdcdcd; margin-bottom: auto; }
.testertabs { border-top: 0; }
.testertabs .tab { margin-top: 2px; }
.testertabs .tab.active { margin-top: 0; }

.status { flex: none; height: 13px; display: flex; justify-content: space-between; align-items: center; border-top: 1px solid #c8c8c8; padding: 0 1px; }
.cells { display: grid; grid-template-columns: 62px 54px 38px 38px 36px 37px 36px 68px; }
.cells span { height: 10px; line-height: 10px; border-left: 1px solid #c4c4c4; padding-left: 2px; display: flex; align-items: center; gap: 2px; white-space: nowrap; }
.net svg { width: 13px; height: 8px; }

.taskbar { flex: none; height: 21px; display: flex; justify-content: space-between; background: linear-gradient(90deg, #4b3a33 224px, transparent 224px), linear-gradient(270deg, #4b3a33 224px, transparent 224px), linear-gradient(90deg, #a37d58 224px, #a98866 420px, transparent 600px), linear-gradient(215deg, #bd9c79 118px, #8d5d42 122px, #8d5d42 128px, #b8956e 132px); color: #fff; }
.apps { display: flex; align-items: stretch; }
.apps button { width: 33px; display: flex; flex-direction: column; align-items: center; justify-content: center; color: #3b2a1c; }
.apps button:first-child { width: 26px; }
.apps svg { width: 17px; height: 16px; }
.apps .open { background: rgba(255, 255, 255, .16); border: 1px solid rgba(255, 255, 255, .2); }
.apps .lit { background: rgba(255, 255, 255, .4); }
.apps .rainbow { height: 8px; }
.tray { display: flex; align-items: center; gap: 5px; padding-right: 10px; }
.tray svg { width: 8px; height: 8px; }
.tray .up { width: 5px; height: 5px; }
.tray time { text-align: center; line-height: 9px; margin-left: 4px; }

.stamp { position: absolute; left: 412px; bottom: 5px; width: 200px; height: 100px; background: #fff; display: flex; gap: 6px; padding: 18px 0 0 6px; color: #1349e8; overflow: hidden; }
.stamp svg { width: 43px; height: 44px; margin-top: 7px; }
.stamptext { display: flex; flex-direction: column; align-items: center; font-family: "Noto Sans CJK SC", sans-serif; font-weight: bold; }
.stamptext strong { font-size: 31px; line-height: 38px; }
.stamptext span { font-size: 16px; line-height: 20px; }
.faint { position: absolute; font: 9px/10px "Noto Sans CJK SC", sans-serif; color: #f0f0f0; transform: rotate(-42deg); }
.a { left: 2px; top: 14px; }
.b { left: 12px; top: 82px; }
.c { left: 130px; top: 74px; }
```
FILE: chart.js
```js
const svg = document.getElementById('plot');
const NS = 'http://www.w3.org/2000/svg';
function path(d, stroke, width, dash) {
  const p = document.createElementNS(NS, 'path');
  p.setAttribute('d', d);
  p.setAttribute('fill', 'none');
  p.setAttribute('stroke', stroke);
  p.setAttribute('stroke-width', width);
  if (dash) p.setAttribute('stroke-dasharray', dash);
  svg.appendChild(p);
}
let seed = 7;
function rnd() {
  seed = (seed * 16807) % 2147483647;
  return seed / 2147483647;
}

// grid
let grid = '';
for (let i = 0; i < 52; i++) grid += `M${(126.3 + i * 17.08).toFixed(1)} 54V387`;
for (let i = 0; i < 19; i++) grid += `M108 ${(69.7 + i * 17.6).toFixed(1)}H1000`;
path(grid, '#56626e', 0.7, '2.4 1.6');
path('M108 97.6H1000', '#3c4a56', 1);

// price
const keys = [[108,240],[109,262],[110,285],[112,308],[117,300],[121,302],[125,306],[128,288],[131,280],[135,290],[138,308],[141,318],[143,318],[145,345],[150,302],[155,297],[160,310],[165,292],[170,280],[173,308],[176,335],[178,330],[181,333],[185,328],[187,270],[190,258],[196,255],[198,262],[203,295],[207,325],[211,338],[213,354],[217,335],[223,318],[228,294],[232,287],[238,290],[240,258],[243,247],[247,252],[250,238],[253,255],[256,267],[260,248],[263,262],[265,330],[267,368],[271,372],[274,368],[276,378],[278,358],[281,362],[285,360],[289,342],[293,310],[297,307],[302,328],[309,308],[313,328],[317,345],[321,335],[325,326],[328,345],[332,320],[338,325],[343,283],[346,320],[348,340],[352,362],[355,346],[360,334],[364,340],[366,348],[368,330],[370,303],[374,318],[380,308],[387,310],[392,300],[397,290],[399,275],[403,265],[407,287],[412,283],[416,262],[421,272],[426,265],[430,275],[436,270],[443,267],[445,245],[447,226],[452,225],[456,240],[460,232],[465,243],[468,225],[472,220],[476,225],[479,214],[482,206],[485,225],[490,232],[494,240],[496,272],[497,235],[500,207],[505,192],[511,168],[514,175],[516,147],[519,150],[521,118],[528,112],[532,140],[536,130],[538,165],[542,148],[544,160],[546,130],[550,147],[554,148],[556,178],[562,168],[567,178],[571,202],[576,192],[580,205],[583,212],[584,182],[588,145],[594,138],[596,158],[598,200],[604,190],[610,205],[616,218],[622,212],[627,230],[632,222],[636,207],[640,178],[646,160],[650,165],[655,165],[659,170],[661,210],[664,230],[669,215],[672,205],[674,182],[679,195],[684,192],[688,212],[692,192],[697,190],[701,180],[705,200],[708,208],[711,197],[713,210],[718,195],[724,192],[728,200],[732,210],[737,197],[743,192],[747,175],[752,182],[756,165],[760,158],[764,164],[768,142],[772,120],[776,105],[779,85],[783,78],[786,80],[789,95],[792,122],[797,126],[800,118],[803,107],[808,105],[812,96],[816,98],[819,95]];
const closes = [];
let drift = 0, k = 0;
for (let x = 108; x <= 819; x += 0.5) {
  while (k < keys.length - 2 && keys[k + 1][0] < x) k++;
  const [x0, y0] = keys[k], [x1, y1] = keys[k + 1];
  drift = drift * 0.72 + (rnd() - 0.5) * 10;
  closes.push([x, y0 + (y1 - y0) * (x - x0) / (x1 - x0) + drift]);
}

// bands
const n = 27;
let up = '', low = '', mid = '';
closes.forEach(([x], i) => {
  const w = closes.slice(Math.max(0, i - n), i + 1).map(c => c[1]);
  const m = w.reduce((a, b) => a + b) / w.length;
  const s = Math.sqrt(w.reduce((a, b) => a + (b - m) ** 2, 0) / w.length);
  const c = i ? 'L' : 'M';
  up += `${c}${x} ${(m - 2 * s - 2).toFixed(1)}`;
  low += `${c}${x} ${(m + 2 * s + 2).toFixed(1)}`;
  mid += `${c}${x} ${m.toFixed(1)}`;
});
path(up, '#2c7049', 0.9);
path(low, '#2c7049', 0.9);
path(mid, '#2c7049', 0.9);

// candles
let wick = '', body = '';
closes.forEach(([x, y], i) => {
  const big = rnd() > 0.93 ? 16 : 5;
  wick += `M${x} ${(y - rnd() * big - 1).toFixed(1)}V${(y + rnd() * big + 1).toFixed(1)}`;
  body += `${i ? 'L' : 'M'}${x} ${y.toFixed(1)}`;
});
wick += 'M209 300V352M249 229V245M265 262V356M436 248V275M496 240V281M545 111V140M521 105V130M583 190V228M556 170V200M594 121V150M792 110V134M712 200V222M688 200V222M816 87V112M786 71V86M377 285V310';
path(wick, '#00c800', 0.5);
path(body, '#00ff00', 0.9);

// trade links
path('M142 284L250 242M155 291L250 242M162 291L250 242M185 291L250 242M226 291L257 243M257 243L265 327M286 344L343 282M367 312L400 292M400 292L447 240M497 222L505 187M519 142L583 212M537 143L583 212M544 143L584 193M649 164L770 138M753 164L770 138', '#1414c8', 0.8, '1.6 1.4');
path('M137 313L250 242M160 313L250 242M173 313L250 242M200 313L250 242M277 366L343 282M367 333L430 280M430 260L445 249M496 243L505 187M518 164L583 213M536 165L583 213M545 165L583 213M658 186L770 138', '#b01010', 0.8, '1.6 1.4');

// trade markers
const reds = [[110,250],[109,265],[111,271],[120,292],[123,292],[122,300],[127,296],[133,298],[136,305],[137,313],[160,313],[173,313],[200,313],[250,242],[251,248],[253,254],[260,265],[265,327],[277,366],[343,282],[345,310],[347,317],[361,333],[366,333],[368,333],[362,344],[365,352],[445,249],[452,233],[456,240],[473,226],[479,233],[482,222],[486,229],[489,214],[492,214],[491,243],[496,243],[505,187],[518,164],[536,165],[541,164],[545,164],[553,164],[594,150],[598,157],[586,187],[585,207],[584,214],[605,192],[608,172],[608,199],[634,215],[658,186],[770,138],[817,95],[812,106],[816,106],[815,115]];
const blues = [[119,299],[124,303],[137,291],[156,291],[162,291],[185,291],[226,291],[257,243],[286,344],[355,340],[365,341],[367,312],[489,221],[491,221],[496,222],[519,142],[537,143],[543,143],[545,143],[583,193],[582,213],[605,179],[630,223],[649,164],[753,164],[815,102]];
function marker([x, y], color) {
  const c = document.createElementNS(NS, 'circle');
  c.setAttribute('cx', x);
  c.setAttribute('cy', y);
  c.setAttribute('r', 1.9);
  c.setAttribute('fill', color);
  c.setAttribute('stroke', '#e4e4e4');
  c.setAttribute('stroke-width', 0.6);
  svg.appendChild(c);
}
reds.forEach(p => marker(p, '#ff1c1c'));
blues.forEach(p => marker(p, '#1a2cff'));
const tri = document.createElementNS(NS, 'path');
tri.setAttribute('d', 'M819 54h5l-2.500 3z');
tri.setAttribute('fill', '#9fb0be');
svg.appendChild(tri);
```
